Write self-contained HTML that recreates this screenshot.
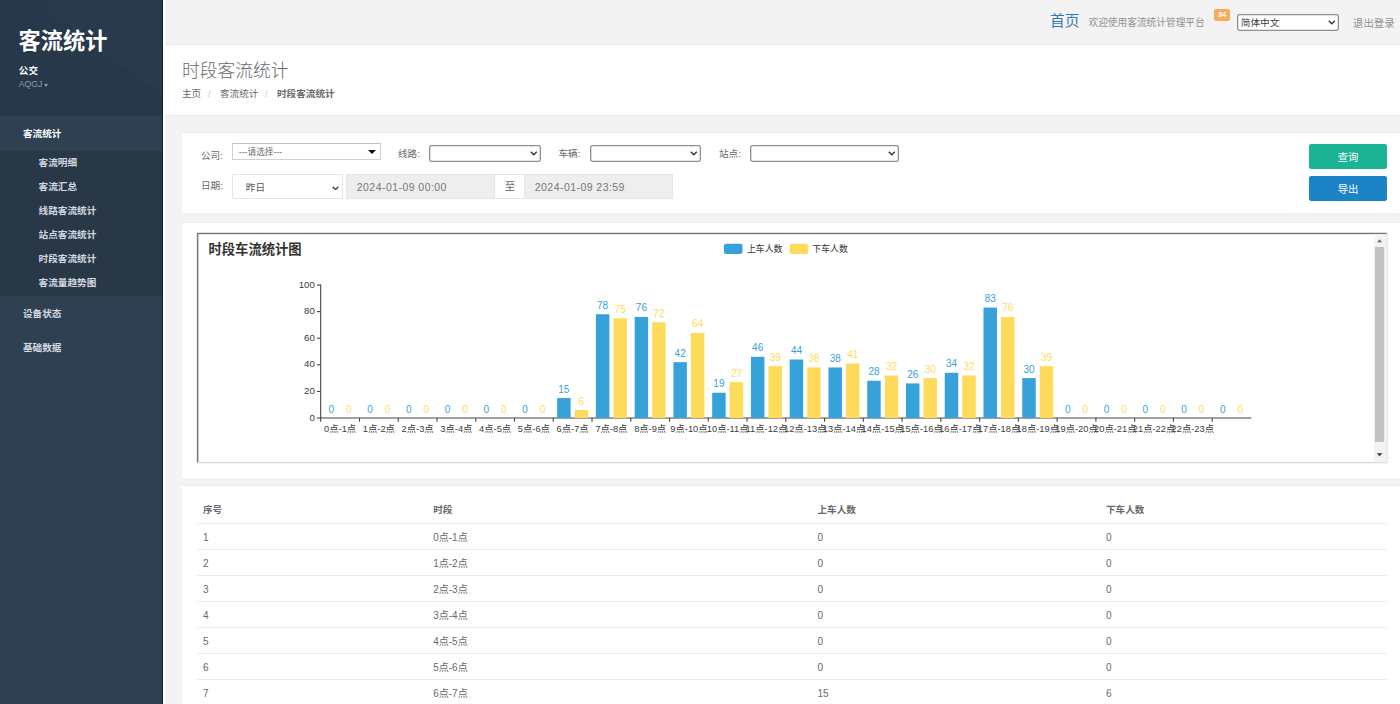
<!DOCTYPE html>
<html lang="zh-CN">
<head>
<meta charset="utf-8">
<title>时段客流统计</title>
<style>
*{box-sizing:border-box;margin:0;padding:0}
html,body{width:1400px;height:704px;overflow:hidden}
body{position:relative;background:#f3f3f4;color:#676a6c;font-family:"Liberation Sans","Noto Sans CJK SC",sans-serif;font-size:9.62px;line-height:13.74px}
.abs{position:absolute;white-space:nowrap}
/* sidebar */
.side{position:absolute;left:0;top:0;width:163px;height:704px;background:#2f4050;border-right:1px solid #0c1d30;overflow:hidden}
.nav-header{position:absolute;left:0;top:0;width:163px;height:116px;background:#263849;overflow:hidden}
.nav-header:before{content:"";position:absolute;left:60px;top:-40px;width:200px;height:120px;background:#2a3d4e;transform:rotate(35deg);opacity:.55}
.logo{position:absolute;left:18.6px;top:26px;font-size:22.2px;line-height:32px;font-weight:700;color:#fff;white-space:nowrap}
.uname{position:absolute;left:18.8px;top:64.3px;font-size:9.62px;line-height:14px;font-weight:700;color:#fff}
.urole{position:absolute;left:18.8px;top:77.4px;font-size:8.7px;line-height:14px;color:#8b9db0;white-space:nowrap}
.urole i{display:inline-block;width:0;height:0;border-left:2.8px solid transparent;border-right:2.8px solid transparent;border-top:3px solid #8b9db0;margin-left:2px;vertical-align:.6px}
.menu{position:absolute;left:0;top:116px;width:163px;list-style:none}
.menu>li>a{display:block;height:34.5px;line-height:36.5px;padding-left:23px;color:#d3d9e2;font-weight:700;font-size:9.62px;text-decoration:none}
.menu>li.active>a{color:#fff;background:#2f4050}
.menu>li.active{background:#293846}
.sub{list-style:none;padding-bottom:.8px}
.sub li a{display:block;height:24.1px;line-height:24.7px;padding-left:38.6px;color:#d3d9e2;font-weight:700;font-size:9.62px;text-decoration:none}
.strip{position:absolute;left:163px;top:0;width:2px;height:704px;background:#fff}
/* top bar */
.topbar{position:absolute;left:165px;top:0;width:1235px;height:45px;background:#f3f3f4;border-bottom:1px solid #e7eaec}
.home{left:885px;top:10.4px;font-size:14.8px;line-height:22px;color:#337ab7}
.welcome{left:923.5px;top:15.5px;font-size:9.7px;line-height:14px;color:#8f9294}
.badge{left:1049px;top:9px;width:16px;height:11.8px;background:#f8ac59;border-radius:2px;color:#fff;font-size:7.4px;line-height:11.8px;font-weight:700;text-align:center}
.lang{left:1072px;top:14px;width:101.5px;height:16.8px;border:0;box-shadow:inset 0 0 0 1.3px #8f8f8f;border-radius:2.4px;background:#fff;color:#3c3c3c;font-size:9.62px;line-height:17.8px;padding-left:3.8px}
.chev{position:absolute;right:3.4px;top:50%;width:7.6px;height:4.6px;margin-top:-2.1px}
.logout{left:1188px;top:15.6px;font-size:10.4px;line-height:15px;color:#8f9294}
/* heading */
.heading{position:absolute;left:165px;top:45px;width:1235px;height:71px;background:#fff;border-bottom:1px solid #e7eaec}
.h2{left:17px;top:13.4px;font-size:17.76px;line-height:26px;font-weight:300;color:#676a6c}
.bc{top:42.3px;font-size:9.62px;line-height:14px;color:#676a6c}
.bc.sep{color:#ccc}
.bc b{font-weight:700}
/* panels */
.panel{position:absolute;left:182px;width:1222px;background:#fff;border-top:1px solid #ebecec}
.lbl{font-size:9.62px;line-height:14px;color:#676a6c}
.nsel{height:16.4px;border:0;box-shadow:inset 0 0 0 1.3px #8f8f8f;border-radius:2.4px;background:#fff}
.combo{height:16.4px;border:1px solid #d0d0d0;border-top-color:#c2c2c2;background:#fff;font-size:8.7px;line-height:17.2px;color:#6c6c6c;padding-left:6px}
.combo i{position:absolute;right:3.6px;top:5.4px;width:0;height:0;border-left:4.6px solid transparent;border-right:4.6px solid transparent;border-top:4.6px solid #111}
.fc{height:25px;border:1px solid #e5e6e7;background:#fff;font-size:10.4px;line-height:24px;color:#676a6c}
.fc.dis{background:#eee;padding-left:9.4px;letter-spacing:.45px;font-size:10.5px;color:#73767a;line-height:24.6px}
.btn{width:78.6px;height:25px;border-radius:2.2px;color:#fff;font-size:10.36px;line-height:27.6px;text-align:center}
.frame{position:absolute;left:197px;top:233px;width:1191px;height:230.4px;border:1.5px solid;border-color:#767676 #ececec #ececec #767676;background:#fff}
.sbar{position:absolute;left:1374.2px;top:234.4px;width:12.6px;height:228px;background:#f1f1f1}
.sbar .th{position:absolute;left:1px;top:12.6px;width:9.4px;height:195px;background:#c1c1c1}
.sbar i{position:absolute;left:3.1px;width:0;height:0;border-left:3px solid transparent;border-right:3px solid transparent}
.sbar i.up{top:4.6px;border-bottom:3.2px solid #505050}
.sbar i.dn{bottom:4.6px;border-top:3.2px solid #505050}
svg.chart{position:absolute;left:0;top:0;pointer-events:none}
.ctitle{font-size:13.3px;font-weight:700;fill:#333}
.cleg{font-size:8.9px;fill:#333}
.cyl{font-size:9.7px;fill:#3c3c3c}
.cxl{font-size:9.3px;fill:#3c3c3c}
.cvl{font-size:10px}
.ax{stroke:#444;stroke-width:1.1;fill:none}
svg text{font-family:"Liberation Sans","Noto Sans CJK SC",sans-serif}
/* table */
table{position:absolute;left:197px;top:497px;width:1190.4px;border-collapse:collapse;table-layout:fixed;font-size:9.62px;color:#676a6c}
th,td{text-align:left;padding:0 0 0 5.9px;height:26.14px;line-height:13.7px;border-bottom:1px solid #e9ecee;font-weight:400;vertical-align:middle}
th{font-weight:700;padding-top:1px}
td{font-size:10px;padding-top:2.8px}
</style>
</head>
<body>
<div class="side">
  <div class="nav-header">
    <div class="logo">客流统计</div>
    <div class="uname">公交</div>
    <div class="urole">AQGJ<i></i></div>
  </div>
  <ul class="menu">
    <li class="active"><a>客流统计</a>
      <ul class="sub">
        <li><a>客流明细</a></li>
        <li><a>客流汇总</a></li>
        <li><a>线路客流统计</a></li>
        <li><a>站点客流统计</a></li>
        <li><a>时段客流统计</a></li>
        <li><a>客流量趋势图</a></li>
      </ul>
    </li>
    <li><a>设备状态</a></li>
    <li><a>基础数据</a></li>
  </ul>
</div>
<div class="strip"></div>

<div class="topbar">
  <div class="abs home">首页</div>
  <div class="abs welcome">欢迎使用客流统计管理平台</div>
  <div class="abs badge">34</div>
  <div class="abs lang">简体中文<svg class="chev" viewBox="0 0 10 6"><path d="M1 1l4 4 4-4" fill="none" stroke="#333" stroke-width="1.8"/></svg></div>
  <div class="abs logout">退出登录</div>
</div>

<div class="heading">
  <div class="abs h2">时段客流统计</div>
  <div class="abs bc" style="left:17px">主页</div>
  <div class="abs bc sep" style="left:43px">/</div>
  <div class="abs bc" style="left:55px">客流统计</div>
  <div class="abs bc sep" style="left:100px">/</div>
  <div class="abs bc" style="left:112px"><b>时段客流统计</b></div>
</div>

<!-- filter panel -->
<div class="panel" style="top:132px;height:81px">
  <div class="abs lbl" style="left:19px;top:15.8px">公司:</div>
  <div class="abs combo" style="left:49.8px;top:10.4px;width:149px">---请选择---<i></i></div>
  <div class="abs lbl" style="left:216px;top:14px">线路:</div>
  <div class="abs nsel" style="left:247.2px;top:12.2px;width:111.6px"><svg class="chev" viewBox="0 0 10 6"><path d="M1 1l4 4 4-4" fill="none" stroke="#333" stroke-width="1.8"/></svg></div>
  <div class="abs lbl" style="left:376.5px;top:14px">车辆:</div>
  <div class="abs nsel" style="left:407.6px;top:12.2px;width:111.6px"><svg class="chev" viewBox="0 0 10 6"><path d="M1 1l4 4 4-4" fill="none" stroke="#333" stroke-width="1.8"/></svg></div>
  <div class="abs lbl" style="left:537px;top:14px">站点:</div>
  <div class="abs nsel" style="left:568px;top:12.2px;width:148.8px"><svg class="chev" viewBox="0 0 10 6"><path d="M1 1l4 4 4-4" fill="none" stroke="#333" stroke-width="1.8"/></svg></div>

  <div class="abs lbl" style="left:19px;top:45.6px">日期:</div>
  <div class="abs fc" style="left:49.8px;top:41.4px;width:111.4px;padding-left:13px;color:#555;font-size:9.62px;line-height:25.4px">昨日<svg class="chev" style="right:3.6px;width:7px;height:4.4px;margin-top:-1.4px" viewBox="0 0 10 6"><path d="M1 1l4 4 4-4" fill="none" stroke="#333" stroke-width="1.8"/></svg></div>
  <div class="abs fc dis" style="left:164.4px;top:41.4px;width:149px">2024-01-09 00:00</div>
  <div class="abs fc" style="left:313.2px;top:41.4px;width:29.4px;text-align:center;border-left:0;border-right:0">至</div>
  <div class="abs fc dis" style="left:342.4px;top:41.4px;width:149px">2024-01-09 23:59</div>

  <div class="abs btn" style="left:1126.8px;top:10.6px;background:#1ab394">查询</div>
  <div class="abs btn" style="left:1126.8px;top:43.4px;background:#1c84c6">导出</div>
</div>

<!-- chart panel -->
<div class="panel" style="top:221.6px;height:256.2px"></div>
<svg class="chart" width="1400" height="704" viewBox="0 0 1400 704">
<rect x="196.9" y="232.8" width="1191.3" height="230.7" fill="#ececec"/>
<rect x="196.9" y="232.8" width="1189.8" height="229.5" fill="#767676"/>
<rect x="198.4" y="234.2" width="1188.3" height="228.1" fill="#fff"/>
<rect x="1374.1" y="234.2" width="12.6" height="228.1" fill="#f3f3f3"/>
<rect x="1375" y="247" width="9.2" height="194.9" fill="#c1c1c1"/>
<path d="M1376.9 242.3L1379.5 239.5L1382.1 242.3Z" fill="#6a6a6a"/>
<path d="M1376.8 453.2L1382.3 453.2L1379.55 456.3Z" fill="#333"/>
<text x="208.5" y="254.3" class="ctitle">时段车流统计图</text>
<rect x="724" y="243.7" width="18.5" height="10.3" rx="2.2" fill="#37a2da"/>
<text x="747" y="251.6" class="cleg">上车人数</text>
<rect x="789.7" y="243.7" width="18.5" height="10.3" rx="2.2" fill="#ffdb5c"/>
<text x="812.3" y="251.6" class="cleg">下车人数</text>
<path d="M320.70 284.60 V418.40" class="ax"/>
<path d="M317.00 418.00 H320.70" class="ax"/>
<text x="314.80" y="420.60" class="cyl" text-anchor="end">0</text>
<path d="M317.00 391.40 H320.70" class="ax"/>
<text x="314.80" y="394.00" class="cyl" text-anchor="end">20</text>
<path d="M317.00 364.80 H320.70" class="ax"/>
<text x="314.80" y="367.40" class="cyl" text-anchor="end">40</text>
<path d="M317.00 338.20 H320.70" class="ax"/>
<text x="314.80" y="340.80" class="cyl" text-anchor="end">60</text>
<path d="M317.00 311.60 H320.70" class="ax"/>
<text x="314.80" y="314.20" class="cyl" text-anchor="end">80</text>
<path d="M317.00 285.00 H320.70" class="ax"/>
<text x="314.80" y="287.60" class="cyl" text-anchor="end">100</text>
<path d="M320.30 418.00 H1251.34" class="ax"/>
<path d="M320.70 418.00 V421.70" class="ax"/>
<path d="M359.46 418.00 V421.70" class="ax"/>
<path d="M398.22 418.00 V421.70" class="ax"/>
<path d="M436.98 418.00 V421.70" class="ax"/>
<path d="M475.74 418.00 V421.70" class="ax"/>
<path d="M514.50 418.00 V421.70" class="ax"/>
<path d="M553.26 418.00 V421.70" class="ax"/>
<path d="M592.02 418.00 V421.70" class="ax"/>
<path d="M630.78 418.00 V421.70" class="ax"/>
<path d="M669.54 418.00 V421.70" class="ax"/>
<path d="M708.30 418.00 V421.70" class="ax"/>
<path d="M747.06 418.00 V421.70" class="ax"/>
<path d="M785.82 418.00 V421.70" class="ax"/>
<path d="M824.58 418.00 V421.70" class="ax"/>
<path d="M863.34 418.00 V421.70" class="ax"/>
<path d="M902.10 418.00 V421.70" class="ax"/>
<path d="M940.86 418.00 V421.70" class="ax"/>
<path d="M979.62 418.00 V421.70" class="ax"/>
<path d="M1018.38 418.00 V421.70" class="ax"/>
<path d="M1057.14 418.00 V421.70" class="ax"/>
<path d="M1095.90 418.00 V421.70" class="ax"/>
<path d="M1134.66 418.00 V421.70" class="ax"/>
<path d="M1173.42 418.00 V421.70" class="ax"/>
<path d="M1212.18 418.00 V421.70" class="ax"/>
<text x="340.08" y="431.70" class="cxl" text-anchor="middle">0点-1点</text>
<text x="378.84" y="431.70" class="cxl" text-anchor="middle">1点-2点</text>
<text x="417.60" y="431.70" class="cxl" text-anchor="middle">2点-3点</text>
<text x="456.36" y="431.70" class="cxl" text-anchor="middle">3点-4点</text>
<text x="495.12" y="431.70" class="cxl" text-anchor="middle">4点-5点</text>
<text x="533.88" y="431.70" class="cxl" text-anchor="middle">5点-6点</text>
<text x="572.64" y="431.70" class="cxl" text-anchor="middle">6点-7点</text>
<text x="611.40" y="431.70" class="cxl" text-anchor="middle">7点-8点</text>
<text x="650.16" y="431.70" class="cxl" text-anchor="middle">8点-9点</text>
<text x="688.92" y="431.70" class="cxl" text-anchor="middle">9点-10点</text>
<text x="727.68" y="431.70" class="cxl" text-anchor="middle">10点-11点</text>
<text x="766.44" y="431.70" class="cxl" text-anchor="middle">11点-12点</text>
<text x="805.20" y="431.70" class="cxl" text-anchor="middle">12点-13点</text>
<text x="843.96" y="431.70" class="cxl" text-anchor="middle">13点-14点</text>
<text x="882.72" y="431.70" class="cxl" text-anchor="middle">14点-15点</text>
<text x="921.48" y="431.70" class="cxl" text-anchor="middle">15点-16点</text>
<text x="960.24" y="431.70" class="cxl" text-anchor="middle">16点-17点</text>
<text x="999.00" y="431.70" class="cxl" text-anchor="middle">17点-18点</text>
<text x="1037.76" y="431.70" class="cxl" text-anchor="middle">18点-19点</text>
<text x="1076.52" y="431.70" class="cxl" text-anchor="middle">19点-20点</text>
<text x="1115.28" y="431.70" class="cxl" text-anchor="middle">20点-21点</text>
<text x="1154.04" y="431.70" class="cxl" text-anchor="middle">21点-22点</text>
<text x="1192.80" y="431.70" class="cxl" text-anchor="middle">22点-23点</text>
<text x="331.32" y="412.50" class="cvl" fill="#37a2da" text-anchor="middle">0</text>
<text x="348.84" y="412.50" class="cvl" fill="#ffdb5c" text-anchor="middle">0</text>
<text x="370.08" y="412.50" class="cvl" fill="#37a2da" text-anchor="middle">0</text>
<text x="387.60" y="412.50" class="cvl" fill="#ffdb5c" text-anchor="middle">0</text>
<text x="408.84" y="412.50" class="cvl" fill="#37a2da" text-anchor="middle">0</text>
<text x="426.36" y="412.50" class="cvl" fill="#ffdb5c" text-anchor="middle">0</text>
<text x="447.60" y="412.50" class="cvl" fill="#37a2da" text-anchor="middle">0</text>
<text x="465.12" y="412.50" class="cvl" fill="#ffdb5c" text-anchor="middle">0</text>
<text x="486.36" y="412.50" class="cvl" fill="#37a2da" text-anchor="middle">0</text>
<text x="503.88" y="412.50" class="cvl" fill="#ffdb5c" text-anchor="middle">0</text>
<text x="525.12" y="412.50" class="cvl" fill="#37a2da" text-anchor="middle">0</text>
<text x="542.64" y="412.50" class="cvl" fill="#ffdb5c" text-anchor="middle">0</text>
<rect x="557.14" y="398.05" width="13.48" height="19.95" fill="#37a2da"/>
<text x="563.88" y="392.55" class="cvl" fill="#37a2da" text-anchor="middle">15</text>
<rect x="574.66" y="410.02" width="13.48" height="7.98" fill="#ffdb5c"/>
<text x="581.40" y="404.52" class="cvl" fill="#ffdb5c" text-anchor="middle">6</text>
<rect x="595.90" y="314.26" width="13.48" height="103.74" fill="#37a2da"/>
<text x="602.64" y="308.76" class="cvl" fill="#37a2da" text-anchor="middle">78</text>
<rect x="613.42" y="318.25" width="13.48" height="99.75" fill="#ffdb5c"/>
<text x="620.16" y="312.75" class="cvl" fill="#ffdb5c" text-anchor="middle">75</text>
<rect x="634.66" y="316.92" width="13.48" height="101.08" fill="#37a2da"/>
<text x="641.40" y="311.42" class="cvl" fill="#37a2da" text-anchor="middle">76</text>
<rect x="652.18" y="322.24" width="13.48" height="95.76" fill="#ffdb5c"/>
<text x="658.92" y="316.74" class="cvl" fill="#ffdb5c" text-anchor="middle">72</text>
<rect x="673.42" y="362.14" width="13.48" height="55.86" fill="#37a2da"/>
<text x="680.16" y="356.64" class="cvl" fill="#37a2da" text-anchor="middle">42</text>
<rect x="690.94" y="332.88" width="13.48" height="85.12" fill="#ffdb5c"/>
<text x="697.68" y="327.38" class="cvl" fill="#ffdb5c" text-anchor="middle">64</text>
<rect x="712.18" y="392.73" width="13.48" height="25.27" fill="#37a2da"/>
<text x="718.92" y="387.23" class="cvl" fill="#37a2da" text-anchor="middle">19</text>
<rect x="729.70" y="382.09" width="13.48" height="35.91" fill="#ffdb5c"/>
<text x="736.44" y="376.59" class="cvl" fill="#ffdb5c" text-anchor="middle">27</text>
<rect x="750.94" y="356.82" width="13.48" height="61.18" fill="#37a2da"/>
<text x="757.68" y="351.32" class="cvl" fill="#37a2da" text-anchor="middle">46</text>
<rect x="768.46" y="366.13" width="13.48" height="51.87" fill="#ffdb5c"/>
<text x="775.20" y="360.63" class="cvl" fill="#ffdb5c" text-anchor="middle">39</text>
<rect x="789.70" y="359.48" width="13.48" height="58.52" fill="#37a2da"/>
<text x="796.44" y="353.98" class="cvl" fill="#37a2da" text-anchor="middle">44</text>
<rect x="807.22" y="367.46" width="13.48" height="50.54" fill="#ffdb5c"/>
<text x="813.96" y="361.96" class="cvl" fill="#ffdb5c" text-anchor="middle">38</text>
<rect x="828.46" y="367.46" width="13.48" height="50.54" fill="#37a2da"/>
<text x="835.20" y="361.96" class="cvl" fill="#37a2da" text-anchor="middle">38</text>
<rect x="845.98" y="363.47" width="13.48" height="54.53" fill="#ffdb5c"/>
<text x="852.72" y="357.97" class="cvl" fill="#ffdb5c" text-anchor="middle">41</text>
<rect x="867.22" y="380.76" width="13.48" height="37.24" fill="#37a2da"/>
<text x="873.96" y="375.26" class="cvl" fill="#37a2da" text-anchor="middle">28</text>
<rect x="884.74" y="375.44" width="13.48" height="42.56" fill="#ffdb5c"/>
<text x="891.48" y="369.94" class="cvl" fill="#ffdb5c" text-anchor="middle">32</text>
<rect x="905.98" y="383.42" width="13.48" height="34.58" fill="#37a2da"/>
<text x="912.72" y="377.92" class="cvl" fill="#37a2da" text-anchor="middle">26</text>
<rect x="923.50" y="378.10" width="13.48" height="39.90" fill="#ffdb5c"/>
<text x="930.24" y="372.60" class="cvl" fill="#ffdb5c" text-anchor="middle">30</text>
<rect x="944.74" y="372.78" width="13.48" height="45.22" fill="#37a2da"/>
<text x="951.48" y="367.28" class="cvl" fill="#37a2da" text-anchor="middle">34</text>
<rect x="962.26" y="375.44" width="13.48" height="42.56" fill="#ffdb5c"/>
<text x="969.00" y="369.94" class="cvl" fill="#ffdb5c" text-anchor="middle">32</text>
<rect x="983.50" y="307.61" width="13.48" height="110.39" fill="#37a2da"/>
<text x="990.24" y="302.11" class="cvl" fill="#37a2da" text-anchor="middle">83</text>
<rect x="1001.02" y="316.92" width="13.48" height="101.08" fill="#ffdb5c"/>
<text x="1007.76" y="311.42" class="cvl" fill="#ffdb5c" text-anchor="middle">76</text>
<rect x="1022.26" y="378.10" width="13.48" height="39.90" fill="#37a2da"/>
<text x="1029.00" y="372.60" class="cvl" fill="#37a2da" text-anchor="middle">30</text>
<rect x="1039.78" y="366.13" width="13.48" height="51.87" fill="#ffdb5c"/>
<text x="1046.52" y="360.63" class="cvl" fill="#ffdb5c" text-anchor="middle">39</text>
<text x="1067.76" y="412.50" class="cvl" fill="#37a2da" text-anchor="middle">0</text>
<text x="1085.28" y="412.50" class="cvl" fill="#ffdb5c" text-anchor="middle">0</text>
<text x="1106.52" y="412.50" class="cvl" fill="#37a2da" text-anchor="middle">0</text>
<text x="1124.04" y="412.50" class="cvl" fill="#ffdb5c" text-anchor="middle">0</text>
<text x="1145.28" y="412.50" class="cvl" fill="#37a2da" text-anchor="middle">0</text>
<text x="1162.80" y="412.50" class="cvl" fill="#ffdb5c" text-anchor="middle">0</text>
<text x="1184.04" y="412.50" class="cvl" fill="#37a2da" text-anchor="middle">0</text>
<text x="1201.56" y="412.50" class="cvl" fill="#ffdb5c" text-anchor="middle">0</text>
<text x="1222.80" y="412.50" class="cvl" fill="#37a2da" text-anchor="middle">0</text>
<text x="1240.32" y="412.50" class="cvl" fill="#ffdb5c" text-anchor="middle">0</text>
</svg>

<!-- table panel -->
<div class="panel" style="top:485.4px;height:230px"></div>
<table>
<colgroup><col style="width:230.3px"><col style="width:384.3px"><col style="width:288.5px"><col></colgroup>
<thead><tr><th>序号</th><th>时段</th><th>上车人数</th><th>下车人数</th></tr></thead>
<tbody>
<tr><td>1</td><td>0点-1点</td><td>0</td><td>0</td></tr>
<tr><td>2</td><td>1点-2点</td><td>0</td><td>0</td></tr>
<tr><td>3</td><td>2点-3点</td><td>0</td><td>0</td></tr>
<tr><td>4</td><td>3点-4点</td><td>0</td><td>0</td></tr>
<tr><td>5</td><td>4点-5点</td><td>0</td><td>0</td></tr>
<tr><td>6</td><td>5点-6点</td><td>0</td><td>0</td></tr>
<tr><td>7</td><td>6点-7点</td><td>15</td><td>6</td></tr>
<tr><td>8</td><td>7点-8点</td><td>78</td><td>75</td></tr>
</tbody>
</table>
</body>
</html>
